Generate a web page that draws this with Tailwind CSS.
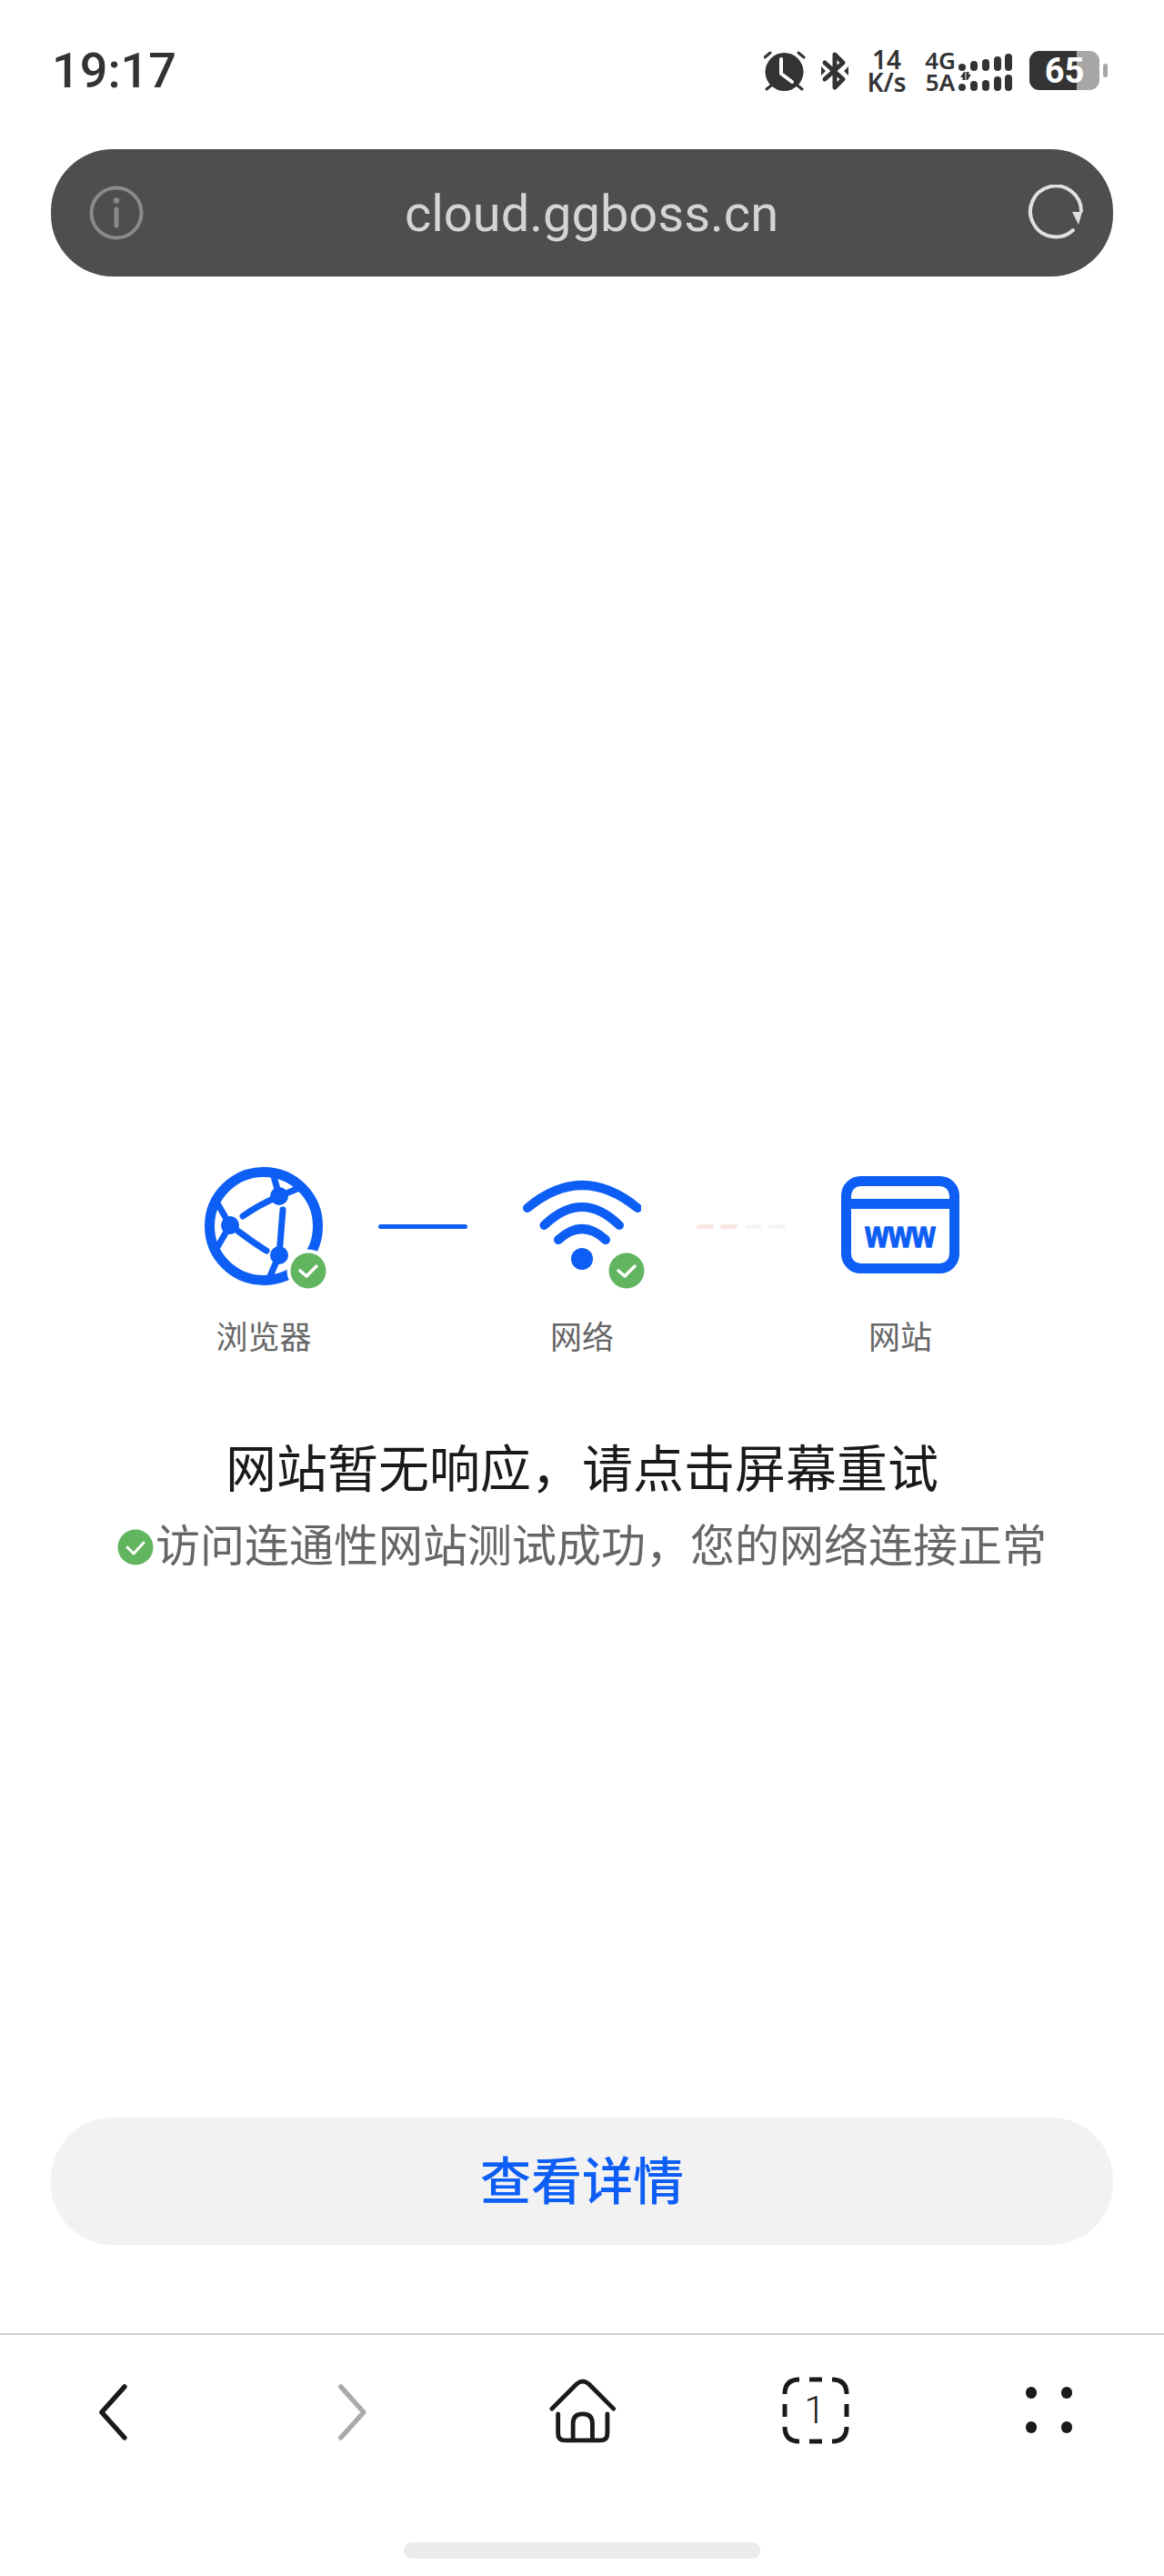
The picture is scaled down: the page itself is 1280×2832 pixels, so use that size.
<!DOCTYPE html>
<html lang="en">

<head>
    <meta charset="UTF-8">
    <meta name="viewport" content="width=device-width, initial-scale=1.0">
    <script src="https://cdn.jsdelivr.net/npm/@tailwindcss/browser@4"></script>
    <title>cloud.ggboss.cn</title>
</head>

<body class="bg-white font-['Roboto','Noto_Sans_CJK_SC',sans-serif]">
    <div class="w-[1280px] h-[2832px] flex flex-col overflow-hidden">

        <!-- status bar -->
        <div class="h-[164px] shrink-0 flex items-start justify-between pl-[57px] pr-[62px] pt-[46px] text-[#333333]">
            <span class="text-[54px] leading-[64px] font-medium">19:17</span>
            <div class="flex items-start pt-[10px]">
                <svg class="w-[46px] h-[46px]" viewBox="0 0 46 46" fill="none" stroke="#333333" stroke-linecap="round">
                    <circle cx="22.500" cy="23" r="21" fill="#333333" stroke="none"></circle>
                    <path d="M1 7 7 2M44 7 38 2M3 42l5-4M42 42l-5-4" stroke-width="3"></path>
                    <path d="M19 9v16l12 9" stroke="#ffffff" stroke-width="4" stroke-linejoin="round"></path>
                </svg>
                <svg class="w-[30px] h-[44px] ml-[17px]" viewBox="0 0 30 44" fill="none">
                    <path d="M4 13 24 31 15 40V4l9 9L4 31" stroke="#333333" stroke-width="5" stroke-linejoin="round" stroke-linecap="round"></path>
                    <path d="M0 17v10l5-5zM30 17v10l-5-5z" fill="#333333"></path>
                </svg>
                <div class="w-[44px] ml-[20px] text-center font-['Noto_Sans'] font-semibold text-[28px] leading-[25px] -mt-[3px]">14<br>K/s</div>
                <div class="w-[34px] ml-[20px] text-center text-[26px] leading-[24px] font-['Noto_Sans'] font-semibold -mt-[2px]">4G<br>5A</div>
                <svg class="w-[62px] h-[46px] ml-[3px]" viewBox="0 0 62 46" fill="#333333">
                    <rect x="0" y="14" width="8" height="8" rx="4"></rect>
                    <rect x="13" y="11" width="8" height="11" rx="4"></rect>
                    <rect x="26" y="9" width="8" height="13" rx="4"></rect>
                    <rect x="39" y="6" width="8" height="16" rx="4"></rect>
                    <rect x="51" y="3" width="8" height="19" rx="4"></rect>
                    <rect x="0" y="36" width="8" height="8" rx="4"></rect>
                    <rect x="13" y="33" width="8" height="11" rx="4"></rect>
                    <rect x="26" y="32" width="8" height="12" rx="4"></rect>
                    <rect x="39" y="28" width="8" height="16" rx="4"></rect>
                    <rect x="51" y="26" width="8" height="18" rx="4"></rect>
                    <path d="M6 23l-4 6h2.500v3h3V23zM10 32l4-6h-2.500v-3h-3v9z"></path>
                </svg>
                <div class="ml-[16px] flex items-center">
                    <div class="relative w-[77px] h-[43px] rounded-[11px] overflow-hidden bg-[#a6a6a6]">
                        <div class="absolute inset-y-0 left-0 w-[52px] bg-[#333333]"></div>
                        <span class="absolute inset-0 flex items-center justify-center text-white font-bold text-[38px] leading-none">65</span>
                    </div>
                    <div class="w-[5px] h-[15px] ml-[4px] rounded-full bg-[#a6a6a6]"></div>
                </div>
            </div>
        </div>

        <!-- address bar -->
        <div class="mx-[56px] h-[140px] shrink-0 rounded-[68px] bg-[#4e4e4e] flex items-center justify-between pl-[42px] pr-[32px]">
            <svg class="w-[60px] h-[60px]" viewBox="0 0 60 60" fill="none" stroke="#8a8a8a" stroke-linecap="round">
                <circle cx="30" cy="30" r="27.500" stroke-width="4"></circle>
                <circle cx="30" cy="16.500" r="3.200" fill="#8a8a8a" stroke="none"></circle>
                <path d="M30 26v18" stroke-width="5"></path>
            </svg>
            <span class="text-[56px] leading-none text-[#d4d4d4] ml-[13px] mt-[2px]">cloud.ggboss.cn</span>
            <svg class="w-[62px] h-[62px]" viewBox="0 0 62 62" fill="none">
                <path d="M50 50A28 28 0 1 1 59 29" stroke="#e0e0e0" stroke-width="4" stroke-linecap="round"></path>
                <path d="M49 30h11l-4 14z" fill="#e0e0e0"></path>
            </svg>
        </div>

        <!-- connection check -->
        <div class="mt-[979px] shrink-0 flex flex-col items-center">
            <div class="flex items-start justify-center gap-[56px]">
                <div class="w-[140px] flex flex-col items-center">
                    <div class="relative w-[130px] h-[130px]">
                        <svg class="w-[130px] h-[130px]" viewBox="0 0 130 130" fill="none" stroke="#0d5ef5" stroke-linecap="round">
                            <circle cx="65" cy="65" r="59.500" stroke-width="11"></circle>
                            <circle cx="82" cy="32" r="10" fill="#0d5ef5" stroke="none"></circle>
                            <circle cx="28" cy="64" r="10" fill="#0d5ef5" stroke="none"></circle>
                            <circle cx="82" cy="97" r="10" fill="#0d5ef5" stroke="none"></circle>
                            <path d="M82 32 76 10M82 32 102 24M82 32C68 38 56 44 42 54M28 64 14 40M28 64 14 88M28 64C42 74 54 84 68 92M82 97 86 47M82 97 72 120" stroke-width="7"></path>
                        </svg>
                        <svg class="absolute left-[90px] top-[90px] w-[48px] h-[48px]" viewBox="0 0 48 48">
                            <circle cx="24" cy="24" r="23.500" fill="#ffffff"></circle>
                            <circle cx="24" cy="24" r="19.500" fill="#62b55f"></circle>
                            <path d="M15 24l7 6 11-11" fill="none" stroke="#ffffff" stroke-width="3.500" stroke-linecap="round" stroke-linejoin="round"></path>
                        </svg>
                    </div>
                    <span class="mt-[34px] text-[35px] leading-[50px] text-[#666666]">浏览器</span>
                </div>
                <div class="w-[98px] h-[5px] mt-[63px] rounded-full bg-[#0d5ef5]"></div>
                <div class="w-[140px] flex flex-col items-center">
                    <div class="relative w-[130px] h-[130px]">
                        <svg class="w-[130px] h-[130px]" viewBox="0 0 130 130" fill="none" stroke="#0d5ef5" stroke-width="10" stroke-linecap="round">
                            <path d="M5 45Q65 -5 126 45"></path>
                            <path d="M23.500 64Q65 24 106 64"></path>
                            <path d="M39 80Q65 56 91 80"></path>
                            <circle cx="65" cy="101" r="12" fill="#0d5ef5" stroke="none"></circle>
                        </svg>
                        <svg class="absolute left-[90px] top-[90px] w-[48px] h-[48px]" viewBox="0 0 48 48">
                            <circle cx="24" cy="24" r="19.500" fill="#62b55f"></circle>
                            <path d="M15 24l7 6 11-11" fill="none" stroke="#ffffff" stroke-width="3.500" stroke-linecap="round" stroke-linejoin="round"></path>
                        </svg>
                    </div>
                    <span class="mt-[34px] text-[35px] leading-[50px] text-[#666666]">网络</span>
                </div>
                <div class="w-[98px] mt-[63px] flex justify-between">
                    <div class="w-[19px] h-[5px] rounded-full bg-[#fbe6e3]"></div>
                    <div class="w-[19px] h-[5px] rounded-full bg-[#fbe6e3]"></div>
                    <div class="w-[19px] h-[5px] rounded-full bg-[#f6f6f6]"></div>
                    <div class="w-[19px] h-[5px] rounded-full bg-[#f6f6f6]"></div>
                </div>
                <div class="w-[140px] flex flex-col items-center">
                    <svg class="w-[130px] h-[130px]" viewBox="0 0 130 130" fill="none">
                        <rect x="5.500" y="15.500" width="119" height="96" rx="16" stroke="#0d5ef5" stroke-width="11"></rect>
                        <path d="M5 40.500h120" stroke="#0d5ef5" stroke-width="11"></path>
                        <text transform="translate(65 88) scale(1 1.250)" text-anchor="middle" fill="#0d5ef5" stroke="#0d5ef5" stroke-width="1.200" stroke-linejoin="round" font-family="Liberation Sans" font-weight="700" font-size="33">www</text>
                    </svg>
                    <span class="mt-[34px] text-[35px] leading-[50px] text-[#666666]">网站</span>
                </div>
            </div>

            <h1 class="mt-[79px] text-[56px] leading-[80px] text-[#1a1a1a] font-normal">网站暂无响应，请点击屏幕重试</h1>
            <div class="mt-[10px] flex items-center text-[49px] leading-[70px] text-[#666666]">
                <svg class="w-[40px] h-[40px] mr-[2px]" viewBox="0 0 40 40">
                    <circle cx="20" cy="20" r="19.500" fill="#62b55f"></circle>
                    <path d="M11 20l7 7 11-12" fill="none" stroke="#ffffff" stroke-width="3" stroke-linecap="round" stroke-linejoin="round"></path>
                </svg>
                <span>访问连通性网站测试成功，您的网络连接正常</span>
            </div>
        </div>

        <!-- details button, pushed down to the nav -->
        <div class="mt-auto mx-[56px] h-[140px] shrink-0 pt-[2px] rounded-[68px] bg-[#f2f2f2] flex items-center justify-center text-[56px] font-medium text-[#0d5ef5]">查看详情</div>

        <!-- bottom nav -->
        <div class="mt-[97px] h-[267px] shrink-0 border-t-2 border-[#d0d0d0] flex flex-col">
            <div class="h-[228px] shrink-0 relative flex items-start justify-between pl-[106px] pr-[102px] pt-[46px]">
                <svg class="w-[40px] h-[64px] mt-[6px]" viewBox="0 0 40 64" fill="none" stroke="#1a1a1a" stroke-width="5.500" stroke-linecap="round" stroke-linejoin="round">
                    <path d="M32 4 6 33 32 62"></path>
                </svg>
                <svg class="w-[40px] h-[64px] mt-[6px] ml-[222px]" viewBox="0 0 40 64" fill="none" stroke="#aaaaaa" stroke-width="5.500" stroke-linecap="round" stroke-linejoin="round">
                    <path d="M8 4 34 33 8 62"></path>
                </svg>
                <svg class="w-[76px] h-[76px] ml-[199px]" viewBox="0 0 76 76" fill="none" stroke="#1a1a1a" stroke-width="5" stroke-linecap="round" stroke-linejoin="round">
                    <path d="M3 35 31 7Q38 1 45 7L73 35"></path>
                    <path d="M10 41V63Q10 71 18 71H58Q66 71 66 63V41"></path>
                    <path d="M27 71V52Q27 41 38 41 49 41 49 52V71"></path>
                </svg>
                <div class="relative w-[74px] h-[74px] ml-[182px] flex items-center justify-center">
                    <svg class="absolute inset-0 w-[74px] h-[74px]" viewBox="0 0 74 74" fill="none" stroke="#1a1a1a" stroke-width="5">
                        <path d="M19 3Q3 3 3 19"></path>
                        <path d="M30 3h14"></path>
                        <path d="M55 3Q71 3 71 19"></path>
                        <path d="M3 30v14"></path>
                        <path d="M71 30v14"></path>
                        <path d="M3 55Q3 71 19 71"></path>
                        <path d="M30 71h14"></path>
                        <path d="M71 55Q71 71 55 71"></path>
                    </svg>
                    <span class="text-[42px] leading-none text-[#1a1a1a] font-light">1</span>
                </div>
                <div class="grid grid-cols-2 gap-x-[28px] gap-y-[25px] ml-[196px] mt-[11px]">
                    <div class="w-[12px] h-[13px] rounded-full bg-[#1a1a1a]"></div>
                    <div class="w-[12px] h-[13px] rounded-full bg-[#1a1a1a]"></div>
                    <div class="w-[12px] h-[13px] rounded-full bg-[#1a1a1a]"></div>
                    <div class="w-[12px] h-[13px] rounded-full bg-[#1a1a1a]"></div>
                </div>
            </div>
            <div class="w-[392px] h-[18px] mx-auto rounded-full bg-[#ebebeb]"></div>
        </div>
    </div>
</body>

</html>
